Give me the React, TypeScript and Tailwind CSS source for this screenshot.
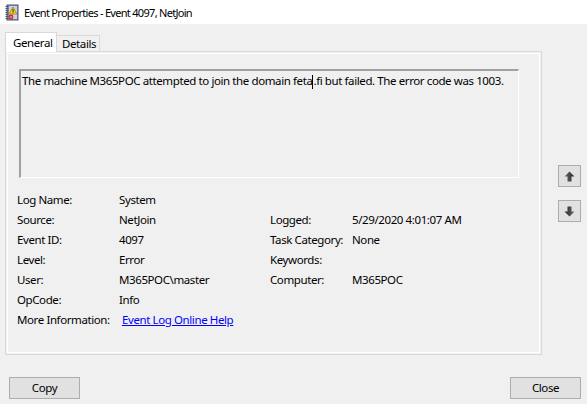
import React from "react";

const font = { fontFamily: '"Noto Sans", "Open Sans", sans-serif' };

const TitleIcon = () => (
  <svg width="14" height="17" viewBox="0 0 14 17">
    <rect x="2" y="1" width="11" height="15" fill="#8a96b8" stroke="#4a5478" strokeWidth="1" />
    <rect x="4" y="2" width="8" height="13" fill="#c8d0e6" />
    {[2, 4, 6, 8, 10, 12, 14].map((y) => (
      <rect key={y} x="0.5" y={y} width="3" height="1" fill="#555" />
    ))}
    <polygon points="8,3 12,10 4,10" fill="#f5d21a" stroke="#8a6d00" strokeWidth="0.6" />
    <rect x="7.6" y="5" width="0.9" height="3" fill="#222" />
    <rect x="7.6" y="8.4" width="0.9" height="0.9" fill="#222" />
    <circle cx="6" cy="13" r="2.4" fill="#d8222a" />
    <rect x="4.8" y="12.6" width="2.4" height="0.8" fill="#fff" />
  </svg>
);

const Arrow = ({ down }: { down?: boolean }) => (
  <svg width="11" height="11" viewBox="0 0 11 11" className={down ? "rotate-180" : ""}>
    <defs>
      <linearGradient id={down ? "gd" : "gu"} x1="0" y1="0" x2="1" y2="0">
        <stop offset="0" stopColor="#6b6b6b" />
        <stop offset="1" stopColor="#262626" />
      </linearGradient>
    </defs>
    <polygon points="5.5,0.5 10.5,5.5 7.5,5.5 7.5,10.5 3.5,10.5 3.5,5.5 0.5,5.5" fill={`url(#${down ? "gd" : "gu"})`} />
  </svg>
);

const Row = ({ label, value }: { label: string; value?: React.ReactNode }) => (
  <>
    <div className="h-5 leading-5 whitespace-nowrap">{label}</div>
    <div className="h-5 leading-5 whitespace-nowrap">{value}</div>
  </>
);

export default function App() {
  return (
    <div
      className="w-[587px] h-[404px] bg-[#f0f0f0] text-[11.5px] tracking-[-0.4px] text-black overflow-hidden"
      style={font}
    >
      <div className="h-[24px] bg-white flex items-center pl-[5px]">
        <TitleIcon />
        <span className="ml-[5px] leading-none text-[11px] tracking-[-0.7px]">Event Properties - Event 4097, NetJoin</span>
      </div>

      <div className="flex pl-[5px]">
        <div className="w-[537px]">
          <div className="flex items-end h-[27px]">
            <div className="h-[20px] w-[52px] bg-white border border-b-0 border-[#d9d9d9] relative z-10 -mb-px flex items-center pl-[7px]">
              General
            </div>
            <div className="h-[16px] w-[43px] bg-[#f0f0f0] border border-l-0 border-b-0 border-[#d9d9d9] flex items-center pl-[5px]">
              Details
            </div>
          </div>
          <div className="h-[304px] border border-[#d9d9d9] p-px">
            <div className="h-full border border-white pt-[15px] pl-[9px]">
              <div className="ml-[2px] w-[500px] h-[109px] border-t-2 border-l-2 border-t-[#a0a0a0] border-l-[#a0a0a0] border-r border-b border-r-white border-b-white bg-[#f0f0f0] pl-[1px] pt-[2px] leading-[16px] whitespace-nowrap">
                The machine M365POC attempted to join the domain feta
                <span className="inline-block w-px h-[14px] bg-black align-middle" />
                .fi but failed. The error code was 1003.
              </div>
              <div className="flex mt-[12px]">
                <div className="grid grid-cols-[102px_151px] w-[253px]">
                  <Row label="Log Name:" value="System" />
                  <Row label="Source:" value="NetJoin" />
                  <Row label="Event ID:" value="4097" />
                  <Row label="Level:" value="Error" />
                  <Row label="User:" value="M365POC\master" />
                  <Row label="OpCode:" value="Info" />
                  <Row
                    label="More Information:"
                    value={<span className="ml-[3px] text-[#0000ff] underline">Event Log Online Help</span>}
                  />
                </div>
                <div className="grid grid-cols-[82px_180px] h-fit mt-5">
                  <Row label="Logged:" value="5/29/2020 4:01:07 AM" />
                  <Row label="Task Category:" value="None" />
                  <Row label="Keywords:" value="" />
                  <Row label="Computer:" value="M365POC" />
                </div>
              </div>
            </div>
          </div>
        </div>

        <div className="ml-[16px] pt-[141px] flex flex-col gap-[13px]">
          <button className="w-[23px] h-[22px] border border-[#adadad] bg-[#e1e1e1] flex items-center justify-center">
            <Arrow />
          </button>
          <button className="w-[23px] h-[22px] border border-[#adadad] bg-[#e1e1e1] flex items-center justify-center">
            <Arrow down />
          </button>
        </div>
      </div>

      <div className="flex justify-between pl-[9px] pr-[6px] mt-[22px]">
        <button className="w-[71px] h-[22px] border border-[#adadad] bg-[#e1e1e1] leading-none">Copy</button>
        <button className="w-[71px] h-[22px] border border-[#adadad] bg-[#e1e1e1] leading-none">Close</button>
      </div>
    </div>
  );
}
